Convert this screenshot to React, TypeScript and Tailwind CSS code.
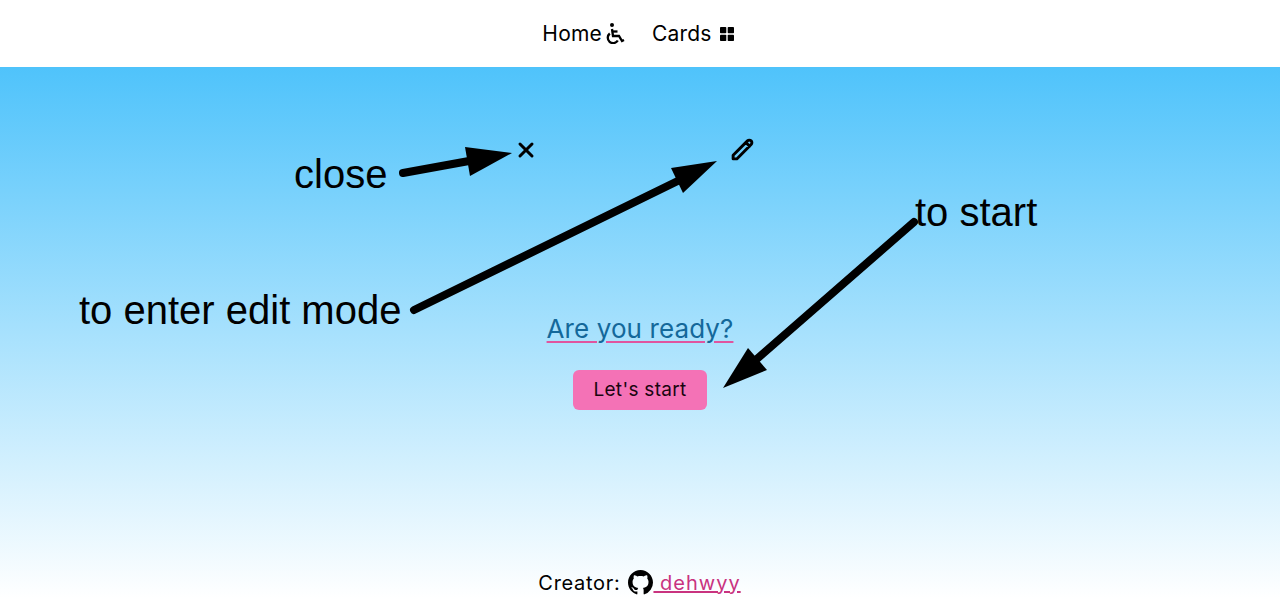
import React from 'react';
import { BsGithub } from 'react-icons/bs';
import { HiOutlinePencil } from 'react-icons/hi';
import { X } from 'lucide-react';

const NavLink: React.FC<{ label: string; gap: string; children: React.ReactNode }> = ({ label, gap, children }) => (
  <a className={`flex items-center ${gap} text-[21px] tracking-[0.2px] text-black`}>
    {label}
    {children}
  </a>
);

const WheelchairIcon = () => (
  <svg width="19" height="21" viewBox="0 0 19 21" fill="none" stroke="#000" strokeWidth="2.3">
    <circle cx="6" cy="2" r="2" fill="#000" stroke="none" />
    <path d="M6 6 L7 13 L13 13 L16 18 L18 17" />
    <path d="M6 8.5 L11.5 8.5" />
    <path d="M3.8 10.5 A5.4 5.4 0 1 0 11.8 17.5" />
  </svg>
);

const GridIcon = () => (
  <svg width="16" height="16" viewBox="0 0 16 16" fill="#000">
    <rect x="1" y="1" width="6.3" height="6.3" rx="0.8" />
    <rect x="8.7" y="1" width="6.3" height="6.3" rx="0.8" />
    <rect x="1" y="8.7" width="6.3" height="6.3" rx="0.8" />
    <rect x="8.7" y="8.7" width="6.3" height="6.3" rx="0.8" />
  </svg>
);

const Annotations: React.FC = () => (
  <>
    <svg className="absolute inset-0 w-full h-full pointer-events-none" viewBox="0 0 1280 532">
      {/* coordinates are relative to the gradient area, which starts at y=67 */}
      <g stroke="#000" strokeWidth="8" strokeLinecap="round" fill="none">
        <path d="M403 106 L480 92" />
        <path d="M414 243 L690 108" />
        <path d="M914 155 L750 298" />
      </g>
      <g fill="#000">
        <polygon points="512,86 465,80 470,109" />
        <polygon points="717,94 671,101 683,126" />
        <polygon points="723,321 748,281 767,303" />
      </g>
    </svg>
    <div className="font-['Liberation_Sans',sans-serif] text-[40px] leading-[46px] text-black">
      <span className="absolute left-[294px] top-[84px]">close</span>
      <span className="absolute left-[79px] top-[220px]">to enter edit mode</span>
      <span className="absolute left-[915px] top-[122px]">to start</span>
    </div>
  </>
);

export default function App() {
  return (
    <div className="flex h-[599px] flex-col overflow-hidden font-['Inter',sans-serif]">
      <nav className="flex h-[67px] items-center justify-center gap-[27px] bg-white pr-[3px]">
        <NavLink label="Home" gap="gap-[4px]">
          <WheelchairIcon />
        </NavLink>
        <NavLink label="Cards" gap="gap-[7px]">
          <GridIcon />
        </NavLink>
      </nav>

      <main className="relative flex flex-1 flex-col items-center bg-linear-to-b/srgb from-[#4fc3fb] to-white">
        <div className="mt-[70px] flex w-[241px] -translate-x-[6px] items-center justify-between">
          <X size={24} strokeWidth={3} className="text-black" />
          <HiOutlinePencil size={25} strokeWidth={2.8} className="text-black" />
        </div>

        <h1 className="mt-[149px] text-[26px] leading-9 tracking-[0.1px] text-[#14689a] underline decoration-[#e0559f] decoration-2 underline-offset-[3px]">
          Are you ready?
        </h1>
        <button className="mt-[23px] h-10 w-[134px] rounded-md bg-[#f472b6] pt-px text-[19px] tracking-[0.3px] text-[#1a0510]">
          Let's start
        </button>

        <footer className="mt-auto flex h-[33px] items-center gap-[8px] text-[20px] tracking-[0.7px] text-black">
          <span className="-ml-px">Creator:</span>
          <a className="flex items-center text-[#c9337f] underline">
            <BsGithub size={25} className="text-black" />
            <span className="whitespace-pre tracking-[1px]"> dehwyy</span>
          </a>
        </footer>

        <Annotations />
      </main>
    </div>
  );
}
